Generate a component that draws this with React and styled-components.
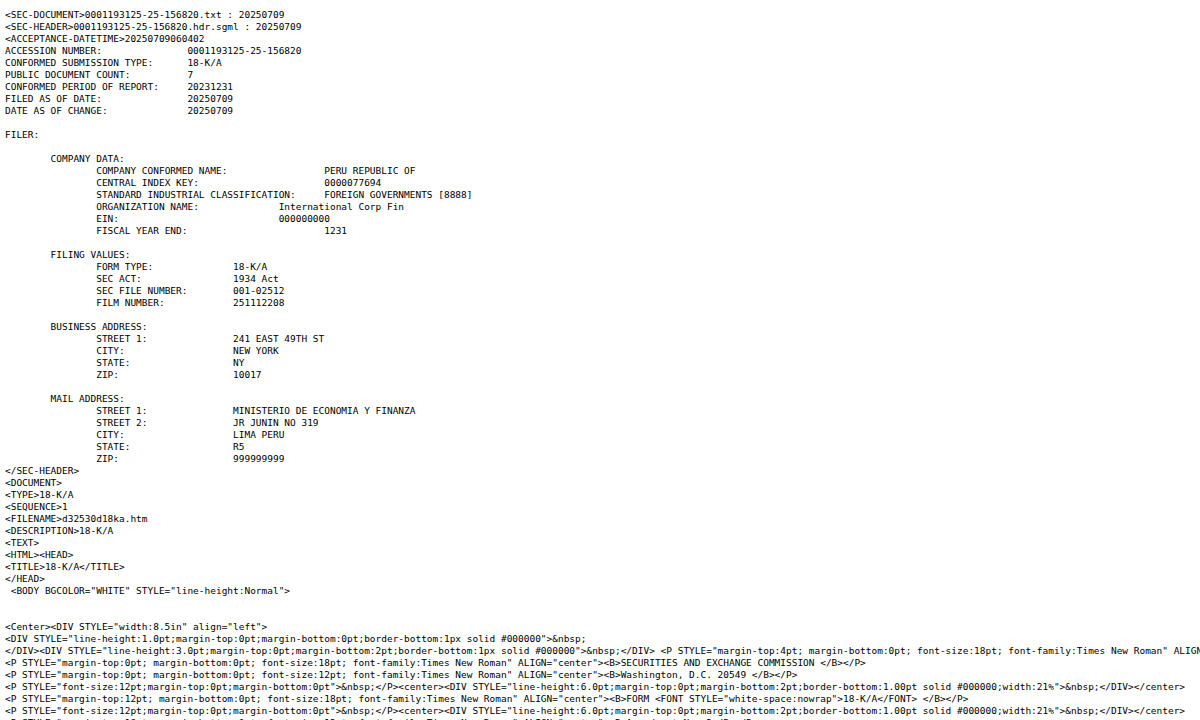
import React from "react"
import styled, { createGlobalStyle } from "styled-components"

const GlobalStyle = createGlobalStyle`
  html, body {
    margin: 0;
    padding: 0;
    background: #fff;
    overflow: hidden;
  }
`

const Page = styled.div`
  width: 1200px;
  height: 720px;
  overflow: hidden;
  padding: 9px 0 0 5px;
  box-sizing: border-box;
`

const Listing = styled.pre`
  margin: 0;
  font-family: "DejaVu Sans Mono", "Liberation Mono", monospace;
  font-size: 9.48px;
  line-height: 12px;
  color: #000;
  white-space: pre;
  tab-size: 8;
  -moz-tab-size: 8;
`

const T = "\t"

const LINES = [
  "<SEC-DOCUMENT>0001193125-25-156820.txt : 20250709",
  "<SEC-HEADER>0001193125-25-156820.hdr.sgml : 20250709",
  "<ACCEPTANCE-DATETIME>20250709060402",
  `ACCESSION NUMBER:${T}${T}0001193125-25-156820`,
  `CONFORMED SUBMISSION TYPE:${T}18-K/A`,
  `PUBLIC DOCUMENT COUNT:${T}${T}7`,
  `CONFORMED PERIOD OF REPORT:${T}20231231`,
  `FILED AS OF DATE:${T}${T}20250709`,
  `DATE AS OF CHANGE:${T}${T}20250709`,
  "",
  "FILER:",
  "",
  `${T}COMPANY DATA:${T}`,
  `${T}${T}COMPANY CONFORMED NAME:${T}${T}${T}PERU REPUBLIC OF`,
  `${T}${T}CENTRAL INDEX KEY:${T}${T}${T}0000077694`,
  `${T}${T}STANDARD INDUSTRIAL CLASSIFICATION:${T}FOREIGN GOVERNMENTS [8888]`,
  `${T}${T}ORGANIZATION NAME:       ${T}International Corp Fin`,
  `${T}${T}EIN:${T}${T}${T}${T}000000000`,
  `${T}${T}FISCAL YEAR END:${T}${T}${T}1231`,
  "",
  `${T}FILING VALUES:`,
  `${T}${T}FORM TYPE:${T}${T}18-K/A`,
  `${T}${T}SEC ACT:${T}${T}1934 Act`,
  `${T}${T}SEC FILE NUMBER:${T}001-02512`,
  `${T}${T}FILM NUMBER:${T}${T}251112208`,
  "",
  `${T}BUSINESS ADDRESS:${T}`,
  `${T}${T}STREET 1:${T}${T}241 EAST 49TH ST`,
  `${T}${T}CITY:${T}${T}${T}NEW YORK`,
  `${T}${T}STATE:${T}${T}${T}NY`,
  `${T}${T}ZIP:${T}${T}${T}10017`,
  "",
  `${T}MAIL ADDRESS:${T}`,
  `${T}${T}STREET 1:${T}${T}MINISTERIO DE ECONOMIA Y FINANZA`,
  `${T}${T}STREET 2:${T}${T}JR JUNIN NO 319`,
  `${T}${T}CITY:${T}${T}${T}LIMA PERU`,
  `${T}${T}STATE:${T}${T}${T}R5`,
  `${T}${T}ZIP:${T}${T}${T}999999999`,
  "</SEC-HEADER>",
  "<DOCUMENT>",
  "<TYPE>18-K/A",
  "<SEQUENCE>1",
  "<FILENAME>d32530d18ka.htm",
  "<DESCRIPTION>18-K/A",
  "<TEXT>",
  "<HTML><HEAD>",
  "<TITLE>18-K/A</TITLE>",
  "</HEAD>",
  ' <BODY BGCOLOR="WHITE" STYLE="line-height:Normal">',
  "",
  "",
  '<Center><DIV STYLE="width:8.5in" align="left">',
  '<DIV STYLE="line-height:1.0pt;margin-top:0pt;margin-bottom:0pt;border-bottom:1px solid #000000">&nbsp;',
  '</DIV><DIV STYLE="line-height:3.0pt;margin-top:0pt;margin-bottom:2pt;border-bottom:1px solid #000000">&nbsp;</DIV> <P STYLE="margin-top:4pt; margin-bottom:0pt; font-size:18pt; font-family:Times New Roman" ALIGN="center"><B>UNITED STATES</B></P>',
  '<P STYLE="margin-top:0pt; margin-bottom:0pt; font-size:18pt; font-family:Times New Roman" ALIGN="center"><B>SECURITIES AND EXCHANGE COMMISSION </B></P>',
  '<P STYLE="margin-top:0pt; margin-bottom:0pt; font-size:12pt; font-family:Times New Roman" ALIGN="center"><B>Washington, D.C. 20549 </B></P>',
  '<P STYLE="font-size:12pt;margin-top:0pt;margin-bottom:0pt">&nbsp;</P><center><DIV STYLE="line-height:6.0pt;margin-top:0pt;margin-bottom:2pt;border-bottom:1.00pt solid #000000;width:21%">&nbsp;</DIV></center>',
  '<P STYLE="margin-top:12pt; margin-bottom:0pt; font-size:18pt; font-family:Times New Roman" ALIGN="center"><B>FORM <FONT STYLE="white-space:nowrap">18-K/A</FONT> </B></P>',
  '<P STYLE="font-size:12pt;margin-top:0pt;margin-bottom:0pt">&nbsp;</P><center><DIV STYLE="line-height:6.0pt;margin-top:0pt;margin-bottom:2pt;border-bottom:1.00pt solid #000000;width:21%">&nbsp;</DIV></center>',
  '<P STYLE="margin-top:18pt; margin-bottom:0pt; font-size:12pt; font-family:Times New Roman" ALIGN="center"><B>Amendment No. 2</B></P>',
]

export default function App() {
  return (
    <>
      <GlobalStyle />
      <Page>
        <Listing>{LINES.join("\n")}</Listing>
      </Page>
    </>
  )
}
